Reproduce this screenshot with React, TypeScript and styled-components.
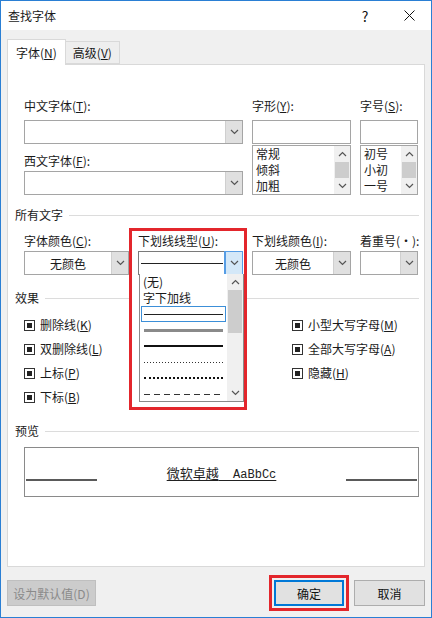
import React from 'react';
import styled, { createGlobalStyle } from 'styled-components';

const GlobalStyle = createGlobalStyle`
  html, body { margin: 0; padding: 0; background: #fff; }
  body {
    font-family: "Noto Sans CJK SC", "Noto Sans", sans-serif;
    font-size: 12px;
    color: #1a1a1a;
  }
  * { box-sizing: border-box; }
`;

const Window = styled.div`
  width: 432px;
  height: 618px;
  border: 1px solid #2a7fd4;
  display: flex;
  flex-direction: column;
  background: #f0f0f0;
  overflow: hidden;
`;

const TitleBar = styled.div`
  height: 29px;
  flex: none;
  background: #fff;
  display: flex;
  align-items: center;
  padding-left: 7px;
`;

const Title = styled.div`
  flex: 1;
  line-height: 16px;
`;

const TitleButton = styled.div`
  width: 44px;
  height: 29px;
  display: flex;
  align-items: center;
  justify-content: center;
  font-size: 14px;
  color: #111;
`;

const Body = styled.div`
  flex: 1;
  display: flex;
  flex-direction: column;
  padding: 9px 6px 0;
`;

const TabRow = styled.div`
  display: flex;
  align-items: flex-end;
  height: 25px;
  position: relative;
  z-index: 1;
`;

const Tab = styled.div<{ $active?: boolean }>`
  height: ${p => (p.$active ? 26 : 23)}px;
  margin-bottom: ${p => (p.$active ? -1 : 0)}px;
  padding: 0 ${p => (p.$active ? 8 : 7)}px;
  background: ${p => (p.$active ? '#fff' : '#eeeeee')};
  border: 1px solid #d9d9d9;
  border-bottom: ${p => (p.$active ? 'none' : '1px solid #d9d9d9')};
  border-left: ${p => (p.$active ? '1px solid #d9d9d9' : 'none')};
  display: flex;
  align-items: center;
  line-height: 16px;
`;

const Panel = styled.div`
  height: 503px;
  flex: none;
  background: #fff;
  border: 1px solid #d9d9d9;
  padding: 33px 5px 0 7px;
  display: flex;
  flex-direction: column;
`;

const FontGrid = styled.div`
  margin-left: 9px;
  display: grid;
  grid-template-columns: 105px 105px 99px 58px;
  column-gap: 9px;
  grid-template-rows: 22px 25px 26px 24px;
  grid-template-areas:
    "cnl cnl stl szl"
    "cn cn st sz"
    "enl enl stlist szlist"
    "en en stlist szlist";
`;

const Label = styled.div<{ $area?: string; $bottom?: boolean }>`
  grid-area: ${p => p.$area || 'auto'};
  line-height: 16px;
  white-space: nowrap;
  align-self: ${p => (p.$bottom ? 'end' : 'start')};
  margin-bottom: ${p => (p.$bottom ? 2 : 0)}px;
`;

const Combo = styled.div<{ $area?: string; $hot?: boolean }>`
  grid-area: ${p => p.$area || 'auto'};
  height: 24px;
  align-self: start;
  border: 1px solid ${p => (p.$hot ? '#7a7a7a' : '#a5a5a5')};
  background: #fff;
  display: flex;
  position: relative;
`;

const ComboValue = styled.div`
  flex: 1;
  display: flex;
  align-items: center;
  justify-content: center;
  padding: 0 2px;
`;

const ArrowBox = styled.div<{ $hot?: boolean }>`
  width: 17px;
  flex: none;
  display: flex;
  align-items: center;
  justify-content: center;
  background: ${p => (p.$hot ? '#d4e8f8' : '#e0e0e0')};
  border-left: 1px solid ${p => (p.$hot ? '#569de5' : '#cfcfcf')};
  outline: ${p => (p.$hot ? '1px solid #569de5' : 'none')};
`;

const ListBox = styled.div<{ $area?: string }>`
  grid-area: ${p => p.$area || 'auto'};
  border: 1px solid #a5a5a5;
  background: #fff;
  display: flex;
  overflow: hidden;
`;

const ListItems = styled.div`
  flex: 1;
  padding: 0 3px;
  display: flex;
  flex-direction: column;
`;

const ListText = styled.div`
  height: 16px;
  line-height: 16px;
  white-space: nowrap;
`;

const ScrollBar = styled.div`
  width: 16px;
  flex: none;
  background: #f0f0f0;
  display: flex;
  flex-direction: column;
`;

const ScrollArrow = styled.div`
  height: 16px;
  flex: none;
  display: flex;
  align-items: center;
  justify-content: center;
`;

const ScrollTrack = styled.div`
  flex: 1;
  display: flex;
  flex-direction: column;
`;

const ScrollThumb = styled.div<{ $h: number }>`
  height: ${p => p.$h}px;
  margin: 0 1px;
  background: #cdcdcd;
`;

const SectionHeader = styled.div<{ $top: number }>`
  display: flex;
  align-items: center;
  gap: 6px;
  height: 16px;
  line-height: 16px;
  margin-top: ${p => p.$top}px;
`;

const HeaderLine = styled.div`
  flex: 1;
  height: 1px;
  background: #dcdcdc;
`;

const AllTextGrid = styled.div`
  margin-left: 9px;
  margin-top: 10px;
  display: grid;
  grid-template-columns: 105px 105px 99px 58px;
  column-gap: 9px;
  row-gap: 2px;
  grid-template-rows: 16px 24px;
`;

const UnderlineField = styled.div`
  grid-row: 1 / span 2;
  grid-column: 2;
  display: grid;
  grid-template-rows: 16px 24px;
  row-gap: 2px;
  position: relative;
  z-index: 5;
`;

const RedFrame = styled.div`
  position: absolute;
  top: -5px;
  left: -9px;
  width: 118px;
  height: 182px;
  border: 3px solid #e3262c;
  background: #fff;
  z-index: 0;
`;

const FieldPart = styled.div`
  position: relative;
  z-index: 1;
`;

const DropList = styled.div`
  position: absolute;
  top: 100%;
  left: 0;
  width: 105px;
  height: 128px;
  border: 1px solid #8a8a8a;
  border-top: none;
  background: #fff;
  display: flex;
  z-index: 2;
`;

const LineItem = styled.div<{ $selected?: boolean }>`
  height: 16px;
  flex: none;
  display: flex;
  align-items: center;
  margin: 0 -2px;
  padding: 0 2px;
  border: 1px solid ${p => (p.$selected ? '#3c8fd8' : 'transparent')};
`;

const Sample = styled.div<{ $kind: string }>`
  flex: 1;
  ${p => {
    switch (p.$kind) {
      case 'double':
        return 'height: 3px; background: #8a8a8a;';
      case 'thick':
        return 'height: 2px; background: #111;';
      case 'dotted':
        return 'height: 1px; background: repeating-linear-gradient(90deg, #333 0 1px, transparent 1px 3px);';
      case 'dotted2':
        return 'border-top: 2px dotted #111;';
      case 'dashed':
        return 'height: 1px; background: repeating-linear-gradient(90deg, #333 0 6px, transparent 6px 10px);';
      default:
        return 'height: 1px; background: #222;';
    }
  }}
`;

const EffectsGrid = styled.div`
  margin-left: 9px;
  margin-top: 7px;
  display: grid;
  grid-template-columns: 268px 1fr;
  grid-template-rows: repeat(4, 24px);
  grid-auto-flow: column;
`;

const CheckItem = styled.div`
  display: flex;
  align-items: center;
  gap: 5px;
  line-height: 16px;
  white-space: nowrap;
`;

const CheckBox = styled.div`
  width: 11px;
  height: 11px;
  border: 1px solid #333;
  background: #fff;
  display: flex;
  align-items: center;
  justify-content: center;
  &::after {
    content: '';
    width: 5px;
    height: 5px;
    background: #222;
  }
`;

const Preview = styled.div`
  margin-left: 9px;
  margin-top: 8px;
  height: 50px;
  border: 1px solid #8a8a8a;
  display: flex;
  align-items: center;
  padding: 0 1px;
`;

const PreviewRule = styled.div`
  width: 71px;
  height: 10px;
  flex: none;
  margin-top: 8px;
  border-bottom: 2px solid #5a5a5a;
`;

const PreviewText = styled.div`
  flex: 1;
  text-align: center;
  white-space: pre;
  font-size: 13px;
  line-height: 16px;
  margin-top: 4px;
  color: #222;
  text-decoration: underline;
  text-underline-offset: 2px;
`;

const Mono = styled.span`
  font-family: "Liberation Mono", "DejaVu Sans Mono", monospace;
  font-size: 12px;
`;

const Footer = styled.div`
  display: flex;
  align-items: flex-start;
  padding-top: 13px;
  gap: 10px;
`;

const Button = styled.div<{ $w: number; $primary?: boolean; $disabled?: boolean; $marked?: boolean }>`
  width: ${p => p.$w}px;
  height: 26px;
  display: flex;
  align-items: center;
  justify-content: center;
  background: ${p => (p.$disabled ? '#cccccc' : '#e1e1e1')};
  border: ${p => (p.$primary ? '2px solid #0078d7' : '1px solid ' + (p.$disabled ? '#bfbfbf' : '#adadad'))};
  color: ${p => (p.$disabled ? '#8a8a8a' : '#111')};
  outline: ${p => (p.$marked ? '3px solid #e3262c' : 'none')};
  outline-offset: 2px;
  &:first-child {
    margin-right: auto;
  }
`;

const Chevron = ({ up }: { up?: boolean }) => (
  <svg width="9" height="6" viewBox="0 0 9 6">
    <polyline
      points={up ? '1,5 4.5,1.5 8,5' : '1,1 4.5,4.5 8,1'}
      fill="none"
      stroke="#555"
      strokeWidth="1.2"
    />
  </svg>
);

const CloseIcon = () => (
  <svg width="11" height="11" viewBox="0 0 11 11">
    <path d="M0.5 0.5 L10.5 10.5 M10.5 0.5 L0.5 10.5" stroke="#111" strokeWidth="1" />
  </svg>
);

function MiniList({ area, items }: { area: string; items: string[] }) {
  return (
    <ListBox $area={area}>
      <ListItems>
        {items.map(i => (
          <ListText key={i}>{i}</ListText>
        ))}
      </ListItems>
      <ScrollBar>
        <ScrollArrow><Chevron up /></ScrollArrow>
        <ScrollTrack><ScrollThumb $h={16} /></ScrollTrack>
        <ScrollArrow><Chevron /></ScrollArrow>
      </ScrollBar>
    </ListBox>
  );
}

const effects = [
  ['删除线', 'K'],
  ['双删除线', 'L'],
  ['上标', 'P'],
  ['下标', 'B'],
  ['小型大写字母', 'M'],
  ['全部大写字母', 'A'],
  ['隐藏', 'H'],
];

const lineKinds = ['double', 'thick', 'dotted', 'dotted2', 'dashed'];

export default function App() {
  return (
    <Window>
      <GlobalStyle />
      <TitleBar>
        <Title>查找字体</Title>
        <TitleButton>?</TitleButton>
        <TitleButton><CloseIcon /></TitleButton>
      </TitleBar>
      <Body>
        <TabRow>
          <Tab $active>字体(<u>N</u>)</Tab>
          <Tab>高级(<u>V</u>)</Tab>
        </TabRow>
        <Panel>
          <FontGrid>
            <Label $area="cnl">中文字体(<u>T</u>):</Label>
            <Combo $area="cn">
              <ComboValue />
              <ArrowBox><Chevron /></ArrowBox>
            </Combo>
            <Label $area="enl" $bottom>西文字体(<u>F</u>):</Label>
            <Combo $area="en">
              <ComboValue />
              <ArrowBox><Chevron /></ArrowBox>
            </Combo>
            <Label $area="stl">字形(<u>Y</u>):</Label>
            <Combo $area="st"><ComboValue /></Combo>
            <MiniList area="stlist" items={['常规', '倾斜', '加粗']} />
            <Label $area="szl">字号(<u>S</u>):</Label>
            <Combo $area="sz"><ComboValue /></Combo>
            <MiniList area="szlist" items={['初号', '小初', '一号']} />
          </FontGrid>

          <SectionHeader $top={12}>所有文字<HeaderLine /></SectionHeader>
          <AllTextGrid>
            <Label>字体颜色(<u>C</u>):</Label>
            <UnderlineField>
              <RedFrame />
              <FieldPart>
                <Label>下划线线型(<u>U</u>):</Label>
              </FieldPart>
              <FieldPart>
                <Combo $hot>
                  <ComboValue><Sample $kind="single" /></ComboValue>
                  <ArrowBox $hot><Chevron /></ArrowBox>
                  <DropList>
                    <ListItems>
                      <ListText>(无)</ListText>
                      <ListText>字下加线</ListText>
                      <LineItem $selected><Sample $kind="single" /></LineItem>
                      {lineKinds.map(k => (
                        <LineItem key={k}><Sample $kind={k} /></LineItem>
                      ))}
                    </ListItems>
                    <ScrollBar>
                      <ScrollArrow><Chevron up /></ScrollArrow>
                      <ScrollTrack><ScrollThumb $h={43} /></ScrollTrack>
                      <ScrollArrow><Chevron /></ScrollArrow>
                    </ScrollBar>
                  </DropList>
                </Combo>
              </FieldPart>
            </UnderlineField>
            <Label>下划线颜色(<u>I</u>):</Label>
            <Label>着重号(·):</Label>
            <Combo>
              <ComboValue>无颜色</ComboValue>
              <ArrowBox><Chevron /></ArrowBox>
            </Combo>
            <Combo style={{ gridColumn: 3 }}>
              <ComboValue>无颜色</ComboValue>
              <ArrowBox><Chevron /></ArrowBox>
            </Combo>
            <Combo>
              <ComboValue />
              <ArrowBox><Chevron /></ArrowBox>
            </Combo>
          </AllTextGrid>

          <SectionHeader $top={15}>效果<HeaderLine /></SectionHeader>
          <EffectsGrid>
            {effects.map(([name, key]) => (
              <CheckItem key={name}>
                <CheckBox />
                <span>{name}(<u>{key}</u>)</span>
              </CheckItem>
            ))}
          </EffectsGrid>

          <SectionHeader $top={14}>预览<HeaderLine /></SectionHeader>
          <Preview>
            <PreviewRule />
            <PreviewText>微软卓越<Mono>  AaBbCc</Mono></PreviewText>
            <PreviewRule />
          </Preview>
        </Panel>
        <Footer>
          <Button $w={89} $disabled>设为默认值(D)</Button>
          <Button $w={70} $primary $marked>确定</Button>
          <Button $w={71}>取消</Button>
        </Footer>
      </Body>
    </Window>
  );
}
